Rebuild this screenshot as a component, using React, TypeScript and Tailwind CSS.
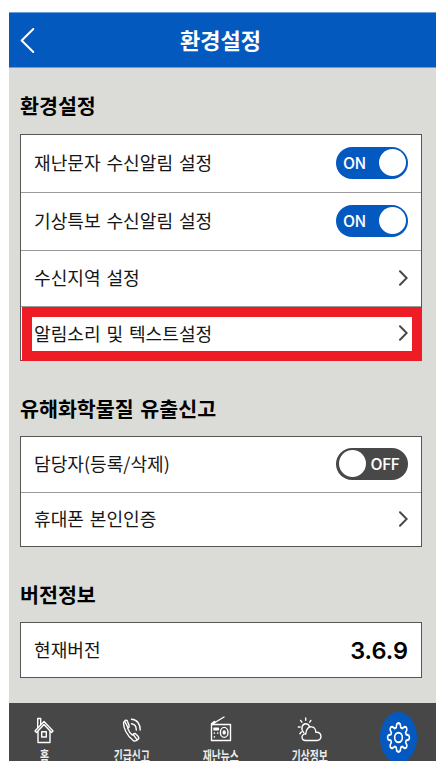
import type { ReactNode } from "react";

const Chevron = () => (
  <svg width="10" height="18" viewBox="0 0 10 18" fill="none" stroke="#484848" strokeWidth="2" strokeLinecap="round">
    <path d="M2 2.3 8.7 9 2 15.7" />
  </svg>
);

function Toggle({ on }: { on: boolean }) {
  return on ? (
    <span className="flex h-8 w-[72px] items-center justify-between rounded-full bg-[#0459c1] pr-[2.5px] pl-[7px] text-white">
      <span className="pb-[1px] text-[16px] leading-none font-medium tracking-[-0.6px]">ON</span>
      <span className="h-[27px] w-[27px] rounded-full bg-white" />
    </span>
  ) : (
    <span className="flex h-8 w-[72px] items-center justify-between rounded-full bg-[#484848] pr-[9px] pl-[2.5px] text-white">
      <span className="h-[27px] w-[27px] rounded-full bg-white" />
      <span className="pb-[1px] text-[16px] leading-none font-medium tracking-[-0.6px]">OFF</span>
    </span>
  );
}

const Label = ({ children }: { children: string }) => (
  <span className="text-[18.1px] leading-none whitespace-nowrap text-[#161616] [word-spacing:1.8px]">
    {children}
  </span>
);

function Row({ label, className, children }: { label: string; className: string; children: ReactNode }) {
  return (
    <div className={`flex items-center justify-between px-[13px] pb-[2px] ${className}`}>
      <Label>{label}</Label>
      {children}
    </div>
  );
}

const Heading = ({ children }: { children: string }) => (
  <h2 className="text-[20.6px] leading-[28px] font-bold whitespace-nowrap text-black [word-spacing:2px]">{children}</h2>
);

function NavItem({ label, children }: { label: string; children: ReactNode }) {
  return (
    <div className="flex w-[40px] flex-col items-center">
      <div className="flex h-[33px] items-end">{children}</div>
      <span className="mt-[4px] origin-center scale-x-[0.7] text-[14px] leading-[14px] font-bold whitespace-nowrap text-[#ededed]">
        {label}
      </span>
    </div>
  );
}

const stroke = { fill: "none", stroke: "#fff", strokeLinejoin: "round", strokeLinecap: "round" } as const;

export default function App() {
  return (
    <div className="h-[771px] w-[446px] overflow-hidden bg-white pt-3 pl-[9px] font-['Noto_Sans_CJK_KR',sans-serif]">
      <div className="flex h-[749px] w-[427px] flex-col overflow-hidden bg-[#dbdcd8]">
        <header className="grid h-14 shrink-0 grid-cols-[60px_1fr_60px] items-center border-y border-[#6b9fdc] bg-[#0459be] text-white">
          <svg className="ml-[10px]" width="17" height="28" viewBox="0 0 17 28" {...stroke} strokeWidth="2">
            <path d="M14.3 3 2.7 14.5 14.3 26" />
          </svg>
          <h1 className="pr-[4px] pb-[2px] text-center text-[22px] leading-none font-bold">환경설정</h1>
        </header>

        <main className="flex h-[635px] shrink-0 flex-col pr-[14px] pl-[11px]">
          <div className="mt-[23px]"><Heading>환경설정</Heading></div>
          <section className="mt-[15px] h-[227px] border border-[#565656] bg-white">
            <Row className="h-[58px] border-b border-[#9b9b9b]" label="재난문자 수신알림 설정"><Toggle on /></Row>
            <Row className="h-[58px] border-b border-[#9b9b9b]" label="기상특보 수신알림 설정"><Toggle on /></Row>
            <Row className="h-[56px] border-b border-[#9b9b9b]" label="수신지역 설정"><Chevron /></Row>
            <div className="ml-[1px] -mr-px h-[54px] border-[10px] border-[#ee1c24]">
              <div className="flex h-full items-center justify-between pr-[4px] pb-[2px] pl-[2px]">
                <Label>알림소리 및 텍스트설정</Label>
                <Chevron />
              </div>
            </div>
          </section>

          <div className="mt-[33px]"><Heading>유해화학물질 유출신고</Heading></div>
          <section className="mt-[14px] h-[111px] border border-[#565656] bg-white">
            <Row className="h-[56px] border-b border-[#9b9b9b]" label="담당자(등록/삭제)"><Toggle on={false} /></Row>
            <Row className="h-[53px]" label="휴대폰 본인인증"><Chevron /></Row>
          </section>

          <div className="mt-[33px]"><Heading>버전정보</Heading></div>
          <section className="mt-[14px] h-[56px] border border-[#565656] bg-white">
            <Row className="h-[54px]" label="현재버전">
              <span className="pt-[3px] font-['Inter',sans-serif] text-[23.5px] leading-none font-semibold text-black">3.6.9</span>
            </Row>
          </section>
        </main>

        <nav className="flex h-[58px] shrink-0 items-start overflow-hidden bg-[#474747] pt-[8px] pl-[15px]">
          <NavItem label="홈">
            <svg width="20" height="27" viewBox="0 0 20 27" {...stroke} strokeWidth="1.4">
              <path d="M1 14 10 4.5 19 14 17.5 15.5 10 7.5 2.5 15.5Z" />
              <path d="M3.7 10.8V1.5H6.7V7.5M4 14.5V25.5H16V14.5" />
              <path d="M7.7 14.7H12.3V20H7.7Z" />
            </svg>
          </NavItem>
          <div className="ml-[48px]">
            <NavItem label="긴급신고">
              <svg className="mb-[1px]" width="20" height="26" viewBox="0 0 20 26" {...stroke} strokeWidth="1.4">
                <path d="M3.5 3.1 1.8 5C.7 10 5 19 11.5 23.7 13 24.7 14.5 24.3 16.8 21.5L16.3 19.5 13.2 16.5 11.7 16.8 10.5 18.1C8.8 17 6.4 13.5 5.7 11.4L7.1 9.9 7 8.3 5.1 3.5Z" />
                <path d="M3 4.7 6 10.6M11.3 17.6 15 22.6M9.5 6.7C12.5 7 14.3 9.6 14.3 13M9.5 2.2C15 2.2 18.3 7.3 18.2 13" />
              </svg>
            </NavItem>
          </div>
          <div className="ml-[49px]">
            <NavItem label="재난뉴스">
              <svg className="mb-[2px]" width="22" height="27" viewBox="0 0 22 27" {...stroke} strokeWidth="1.4">
                <path d="M1.5 9.5H20.5V25.5H1.5ZM3.3 8.5 14 2" />
                <path d="M2 9 4.5 7" strokeWidth="2.3" />
                <ellipse cx="14.2" cy="17.4" rx="3.8" ry="5" />
                <ellipse cx="14.2" cy="17.4" rx="1" ry="1.5" fill="#fff" />
                <path d="M4 13.2H8.4V14.8H4Z" />
                <path d="M4.4 18V18.2M7.7 18V18.2M4.4 21.7V21.9" strokeWidth="1.5" />
              </svg>
            </NavItem>
          </div>
          <div className="ml-[49px]">
            <NavItem label="기상정보">
              <svg className="mr-[2px] mb-[1px]" width="25" height="27" viewBox="0 0 25 27" {...stroke} strokeWidth="1.4">
                <path d="M8.4 24.5C4.8 24.5 4 20.3 6.3 18.5 7 17.8 7.8 17.8 8.7 18 9.1 12.6 12 10.5 14.6 10.8 17.2 11 18.8 13.6 18.8 16.3 25.4 15.8 25.4 24.5 20.1 24.5Z" />
                <path d="M6.7 16.4C3.4 13.2 5 7.7 8.7 7.7 10.6 7.7 12 9 12.5 10.7M8.7 2V4.2M3.6 4.4 4.8 6.2M13.9 4.4 12.7 6.2M1.3 11H3.1M2.9 17.8 4.3 16" />
              </svg>
            </NavItem>
          </div>
          <div className="mt-[1px] ml-[50px] flex h-[51px] w-[37px] items-center justify-center rounded-[50%] bg-[#0459c1]">
            <svg width="25" height="33" viewBox="0 0 24 24" preserveAspectRatio="none" {...stroke} strokeWidth="1.5">
              <path d="M10.3 2.4Q12 .8 13.7 2.4L14.2 4.8 15.7 5.4 17.7 4.2Q20.2 4 20 6.5L18.8 8.5 19.3 9.8 21.7 10.3Q23.2 12 21.7 13.7L19.3 14.2 18.8 15.5 20 17.5Q20.2 20 17.7 19.8L15.7 18.6 14.2 19.2 13.7 21.6Q12 23.2 10.3 21.6L9.8 19.2 8.3 18.6 6.3 19.8Q3.8 20 4 17.5L5.2 15.5 4.7 14.2 2.3 13.7Q.8 12 2.3 10.3L4.7 9.8 5.2 8.5 4 6.5Q3.8 4 6.3 4.2L8.3 5.4 9.8 4.8Z" />
              <ellipse cx="12" cy="12" rx="3.7" ry="3.5" />
            </svg>
          </div>
        </nav>
      </div>
    </div>
  );
}
